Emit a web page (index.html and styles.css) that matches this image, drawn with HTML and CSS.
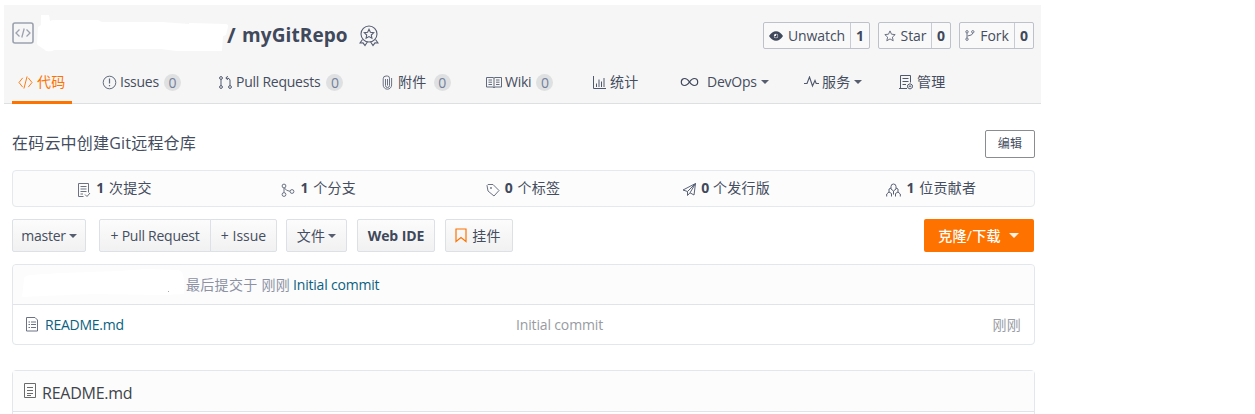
FILE: index.html
```html
<!DOCTYPE html>
<html lang="zh-CN">
<head>
<meta charset="utf-8">
<title>myGitRepo</title>
<link rel="stylesheet" href="styles.css">
</head>
<body>
<div class="page">
  <header class="head">
    <div class="title-row">
      <svg class="repo-icon" width="22" height="22" viewBox="0 0 22 22"><rect x="1" y="1" width="20" height="20" rx="2" fill="none" stroke="#9ba1ae" stroke-width="1.600"/><path d="M7.500 7.500 4 11l3.500 3.500M14.500 7.500 18 11l-3.500 3.500M12.200 6.500 9.800 15.500" fill="none" stroke="#9ba1ae" stroke-width="1.300"/></svg>
      <svg class="owner-mask" width="192" height="38" viewBox="0 0 192 38"><path d="M4 0h8l1 6 3-1 45 0 4 2h60l27 2v-1l37 1q3 1 2 3l-2 8-3 1-1 15h-46l-15-2-60 0-11 1H17q-1 2-8 1l-1-1-6-4L0 29 1 12l3-2z" fill="#fff"/></svg>
      <h1 class="title"><span class="slash">/</span><span>myGitRepo</span></h1>
      <svg class="medal" width="20" height="22" viewBox="0 0 20 22" fill="none" stroke="#565d72" stroke-width="1.100"><circle cx="10" cy="9" r="8"/><path d="m10 4.300 1.400 3 3.300.4-2.400 2.300.6 3.200-2.900-1.600-2.900 1.600.6-3.200L5.300 7.700l3.300-.4zM3.500 14.500 1 18l3-.2L6 20.500l2.500-3.700M16.500 14.500l2.500 3.500-3-.2-2 2.700-2.500-3.700"/></svg>
      <div class="actions">
        <div class="action watch"><span class="act-name"><svg width="14" height="10" viewBox="0 0 14 10"><path d="M0 5Q3 .2 7 .2T14 5Q11 9.800 7 9.800T0 5z" fill="#40485b"/><circle cx="7" cy="5" r="2.200" fill="#f6f6f6"/><path d="M7 5V3.300A1.700 1.700 0 1 1 5.300 5z" fill="#40485b"/></svg><span>Unwatch</span></span><b>1</b></div>
        <div class="action star"><span class="act-name"><svg width="12" height="12" viewBox="0 0 12 12"><path d="m6 .9 1.500 3.300 3.700.4-2.800 2.500.8 3.700L6 8.900l-3.200 1.900.8-3.700L.8 4.600l3.700-.4z" fill="none" stroke="#6b7284"/></svg><span>Star</span></span><b>0</b></div>
        <div class="action fork"><span class="act-name"><svg width="10" height="11" viewBox="0 0 10 11" fill="none" stroke="#6b7284"><circle cx="2" cy="1.800" r="1.200"/><circle cx="7.800" cy="1.800" r="1.200"/><circle cx="2" cy="9.200" r="1.200"/><path d="M2 3v5M7.800 3Q8 5.300 2.500 6"/></svg><span>Fork</span></span><b>0</b></div>
      </div>
    </div>
    <nav class="tabs">
      <a class="tab active"><svg width="15" height="13" viewBox="0 0 16 14"><path d="M5 2 1 7l4 5M11 2l4 5-4 5M9.700.5 6.300 13.500" fill="none" stroke="#fe7300"/></svg><span class="cn">代码</span></a>
      <a class="tab issues"><svg width="15" height="15" viewBox="0 0 15 15"><circle cx="7.500" cy="7.500" r="6.300" fill="none" stroke="#626a7d"/><path d="M7.500 3.500v5M7.500 10v1.300" stroke="#626a7d" stroke-width="1.200"/></svg><span>Issues</span><i class="count">0</i></a>
      <a class="tab pull"><svg width="13" height="13" viewBox="0 0 13 13" fill="none" stroke="#50586c"><circle cx="2" cy="2" r="1.400"/><circle cx="2" cy="11" r="1.400"/><circle cx="11" cy="11" r="1.400"/><path d="M2 3.500v6M11 9.500V4Q11 2 7 2M8.800 0l-2 2 2 2"/></svg><span>Pull Requests</span><i class="count">0</i></a>
      <a class="tab attach"><svg width="11" height="15" viewBox="0 0 11 15"><path d="M3.500 4v6.500a2 2 0 0 0 4 0V3.200A2.200 2.200 0 0 0 5.300 1H4A2.800 2.800 0 0 0 1.200 3.800V10a4.200 4.200 0 0 0 8.400 0V3M5.500 4v6.500" fill="none" stroke="#6b7284"/></svg><span class="cn">附件</span><i class="count">0</i></a>
      <a class="tab wiki"><svg width="16" height="13" viewBox="0 0 16 13"><path d="M.5 1.500h6.500l1 .6 1-.6h6.500v9.500H9l-1 .8-1-.8H.5zM8 2v9.500M2.500 4h3.500M2.500 6.200h3.500M2.500 8.500h3.500M10 4h3.500M10 6.200h3.500M10 8.500h3.500" fill="none" stroke="#626a7d"/></svg><span>Wiki</span><i class="count">0</i></a>
      <a class="tab stats-tab"><svg width="13" height="13" viewBox="0 0 13 13"><path d="M.5 0v12.500H13M3.500 11V7.500M6 11V3.500M8.500 11V5.500M11 11V2" fill="none" stroke="#50586c"/></svg><span class="cn">统计</span></a>
      <a class="tab devops"><svg width="19" height="10" viewBox="0 0 19 10"><path d="M9.500 5C8 2.800 6.800 1.500 4.800 1.500a3.500 3.500 0 0 0 0 7C6.800 8.500 8 7.200 9.500 5s2.700-3.500 4.700-3.500a3.500 3.500 0 0 1 0 7C12.200 8.500 11 7.200 9.500 5z" fill="none" stroke="#40485b" stroke-width="1.200"/></svg><span>DevOps</span><em class="caret"></em></a>
      <a class="tab service"><svg width="15" height="12" viewBox="0 0 15 12"><path d="M0 7.500h3L5.500 1l3 9L11 4.500l1.200 3H15" fill="none" stroke="#50586c" stroke-width="1.100"/></svg><span class="cn">服务</span><em class="caret"></em></a>
      <a class="tab manage"><svg width="14" height="15" viewBox="0 0 14 15" fill="none" stroke="#50586c"><path d="M11.500 7.500V.5h-10v13M3.500 3.500h6M3.500 6.500h6M3.500 9.500H7M0 13.500h8"/><path d="m11 8.700 2.300 1.300v2.700L11 14l-2.300-1.300V10z"/><circle cx="11" cy="11.300" r=".6"/></svg><span class="cn">管理</span></a>
    </nav>
  </header>
  <main class="content">
    <div class="desc-row"><span class="desc">在码云中创建Git远程仓库</span><button class="edit">编辑</button></div>
    <div class="stats">
      <div class="stat"><svg width="14" height="16" viewBox="0 0 14 16" fill="none" stroke="#6b7284"><path d="M6.500 14.500H1.500V1.500h10v9M3.500 4.500h6M3.500 7h6M3.500 9.500h6M3.500 12H6M8 12.500l2 2 3-3.500"/></svg><b>1</b><span class="cn">次提交</span></div>
      <div class="stat"><svg width="14" height="14" viewBox="0 0 14 14" fill="none" stroke="#6b7284"><circle cx="3" cy="3" r="1.900"/><circle cx="3" cy="11.500" r="1.900"/><circle cx="11" cy="8.500" r="1.900"/><path d="M3 5v4.500M3.500 5Q5 8 9 8.300"/></svg><b>1</b><span class="cn">个分支</span></div>
      <div class="stat"><svg width="14" height="14" viewBox="0 0 14 14" fill="none" stroke="#6b7284"><path d="M1 2.500 2 1.500l5 0 6 6-5 5.500L2 8z"/><circle cx="5" cy="5" r=".6"/></svg><b>0</b><span class="cn">个标签</span></div>
      <div class="stat release"><svg width="15" height="15" viewBox="0 0 15 15" fill="none" stroke="#596176"><path d="M1 8 13.500 1.500l-1.500 11.500-4-2.200L5.500 13.500V9.500L13.500 1.500 8 10.800M1 8l4.500 1.500"/></svg><b>0</b><span class="cn">个发行版</span></div>
      <div class="stat"><svg width="15" height="14" viewBox="0 0 15 14" fill="none" stroke="#596176"><path d="M5 6V3.500a2.500 2.500 0 0 1 5 0V6L7.500 8zM5 5 3 6v3L.7 11v2.500M3 9l2.500 1.500v3M10 5l2 1v3l2.300 2v2.500M12 9l-2.500 1.500v3M7.500 8v3.500"/></svg><b>1</b><span class="cn">位贡献者</span></div>
    </div>
    <div class="toolbar">
      <button class="btn branch"><span>master</span><em class="caret"></em></button>
      <div class="group"><button class="btn pr">+ Pull Request</button><button class="btn issue">+ Issue</button></div>
      <button class="btn file"><span class="cn">文件</span><em class="caret"></em></button>
      <button class="btn ide">Web IDE</button>
      <button class="btn widget"><svg width="12" height="15" viewBox="0 0 12 15"><path d="M1 1h10v12.500L6 9.500l-5 4z" fill="none" stroke="#fe7300" stroke-width="1.200"/></svg><span class="cn">挂件</span></button>
      <button class="clone"><span class="cn">克隆/下载</span><em class="caret"></em></button>
    </div>
    <section class="files">
      <div class="commit"><svg class="author-mask" width="162" height="30" viewBox="0 0 162 30"><path d="M2 10Q2 7 8 6L40 4l55-2 30-2 32 1q5 2 5 12v12l-22 1-70-1-48 2-25 1Q1 26 1 20z" fill="#fff"/><path d="M146 22h1v1h-1z" fill="#aaa"/></svg><span class="muted cn">最后提交于 刚刚</span><a class="link">Initial commit</a></div>
      <div class="file-row">
        <div class="file-name"><svg width="14" height="15" viewBox="0 0 14 15" fill="none" stroke="#6b7284"><path d="M1.500.5h8.500l2.500 2.500v11h-11zM3.500 5H5M6 5h5M3.500 7.500H5M6 7.500h5M3.500 10.500H5M6 10.500h5"/></svg><a class="link">README.md</a></div>
        <span class="message">Initial commit</span>
        <span class="when cn">刚刚</span>
      </div>
    </section>
    <section class="readme">
      <div class="readme-head"><svg width="14" height="15" viewBox="0 0 14 15" fill="none" stroke="#6a6a6a"><path d="M1.500.5h11v14h-11zM4 4.500h6M4 7.500h6M4 10.500h6M4 12.500h4"/></svg><span>README.md</span></div>
    </section>
  </main>
</div>
</body>
</html>
```
FILE: styles.css
```css
* { box-sizing: border-box; }
body {
  margin: 0;
  background: #fff;
  color: #454d60;
  font: 14px/20px "Open Sans", "Noto Sans CJK SC", sans-serif;
  letter-spacing: -0.25px;
}
svg { display: block; flex: none; }
button { font: inherit; letter-spacing: inherit; color: inherit; padding: 0; margin: 0; }
b { color: #40485b; }
.cn { letter-spacing: 0.3px; }
.page { width: 1041px; height: 414px; padding: 5px 0 0 4px; overflow: hidden; white-space: nowrap; }
.head { height: 99px; background: #f6f6f6; border-bottom: 1px solid #dedfe1; }
.title-row { display: flex; align-items: center; height: 60px; padding: 0 7px 0 8px; }
.repo-icon { margin-bottom: 4px; }
.owner-mask { margin: -3px 0 0 3px; }
.title { display: flex; align-items: center; gap: 6px; margin: 0 0 0 -2px; font-size: 19px; font-weight: 700; letter-spacing: 0.1px; color: #40485b; }
.slash { width: 9px; font-size: 21px; }
.medal { margin: 2px 0 0 11px; }
.actions { display: flex; gap: 8px; margin: 1px 0 0 auto; }
.action { display: flex; height: 27px; border: 1px solid #bdc1cb; border-radius: 2px; background: #f9f9f9; }
.act-name { flex: 1; display: flex; align-items: center; justify-content: center; gap: 5px; letter-spacing: -0.1px; }
.action b { width: 19px; border-left: 1px solid #c8cbd3; text-align: center; line-height: 25px; }
.watch { width: 107px; }
.star { width: 73px; }
.fork { width: 75px; }
.tabs { display: grid; grid-template-columns: 91px 116px 162px 105px 106px 89px 123px 95px 60px; height: 39px; padding-left: 8px; }
.tab { display: flex; align-items: center; height: 34px; gap: 4px; }
.active { width: 60px; height: 39px; padding: 0 0 2px 6px; border-bottom: 3px solid #fe7300; color: #fe7300; }
.issues { gap: 3px; }
.issues, .attach, .wiki { margin-left: -1px; }
.attach { margin-left: 1px; gap: 5px; }
.wiki { margin-left: 0; gap: 3px; }
.stats-tab { margin-left: 1px; }
.count { min-width: 17px; height: 17px; margin-left: 2px; border-radius: 9px; background: #dfe0e1; color: #73809c; text-align: center; font-style: normal; line-height: 17px; }
.caret { width: 0; height: 0; border: 4px solid transparent; border-top: 4px solid; border-bottom: 0; opacity: .9; }
.devops { gap: 4px; margin-left: -1px; }
.devops svg { margin-right: 4px; }
.service { gap: 3px; }
.service .caret { margin-left: 0; }
.content { padding: 26px 6px 0 8px; }
.desc-row { display: flex; justify-content: space-between; align-items: center; height: 28px; font-size: 16px; }
.desc { margin-top: -2px; letter-spacing: 0.2px; }
.edit { width: 50px; height: 28px; border: 1px solid #8b8c90; border-radius: 2px; background: #fff; font-size: 12px; letter-spacing: 0.2px; }
.stats { display: grid; grid-template-columns: repeat(5, 1fr); height: 37px; margin-top: 12px; border: 1px solid #e3e9ed; border-radius: 4px; background: #fcfcfc; }
.stat { display: flex; align-items: center; justify-content: center; gap: 5px; padding: 0 1px 2px 0; }
.stat svg { margin-top: 4px; }
.release { gap: 4px; padding-right: 3px; }
.toolbar { display: flex; margin-top: 12px; height: 33px; }
.btn { display: flex; align-items: center; justify-content: center; gap: 3px; height: 33px; border: 1px solid #dce1e6; border-radius: 2px; background: linear-gradient(#fcfcfc, #f1f1f1); }
.branch { width: 74px; margin-right: 13px; }
.group { display: flex; }
.pr { width: 112px; border-radius: 2px 0 0 2px; }
.issue { width: 67px; margin-left: -1px; border-radius: 0 2px 2px 0; letter-spacing: 0; }
.file { width: 61px; margin-left: 9px; }
.ide { width: 78px; margin-left: 10px; font-weight: 700; letter-spacing: -0.1px; color: #40485b; }
.widget { width: 68px; margin-left: 10px; gap: 5px; padding-right: 2px; }
.clone { display: flex; align-items: center; justify-content: center; gap: 8px; width: 110px; margin: 0 1px 0 auto; padding-right: 1px; border: 0; border-radius: 2px; background: #fe7300; color: #fff; font-weight: 500; }
.clone .caret { border-width: 5px 5px 0; }
.files { height: 81px; margin-top: 12px; border: 1px solid #e1e7eb; border-radius: 4px; }
.commit { display: flex; align-items: center; height: 40px; padding-left: 9px; border-bottom: 1px solid #dfe4e9; background: #fcfcfc; border-radius: 4px 4px 0 0; letter-spacing: -0.2px; }
.author-mask { margin: -2px 2px 0 0; }
.muted { color: #8c92a4; margin-right: 3px; }
.link { color: #0b617f; }
.file-row { display: grid; grid-template-columns: 491px 1fr auto; align-items: center; height: 39px; padding: 0 13px 0 12px; }
.file-name { display: flex; align-items: center; gap: 6px; }
.message { letter-spacing: -0.15px; }
.message, .when { color: #989ba3; }
.readme { height: 60px; margin-top: 25px; border: 1px solid #e1e7eb; border-radius: 4px; }
.readme-head { display: flex; align-items: center; gap: 5px; height: 41px; padding: 3px 0 0 10px; border-bottom: 1px solid #dfe4e9; background: #fcfcfc; font-size: 16px; color: #40434a; }
.readme-head svg { margin-top: -4px; }
```
